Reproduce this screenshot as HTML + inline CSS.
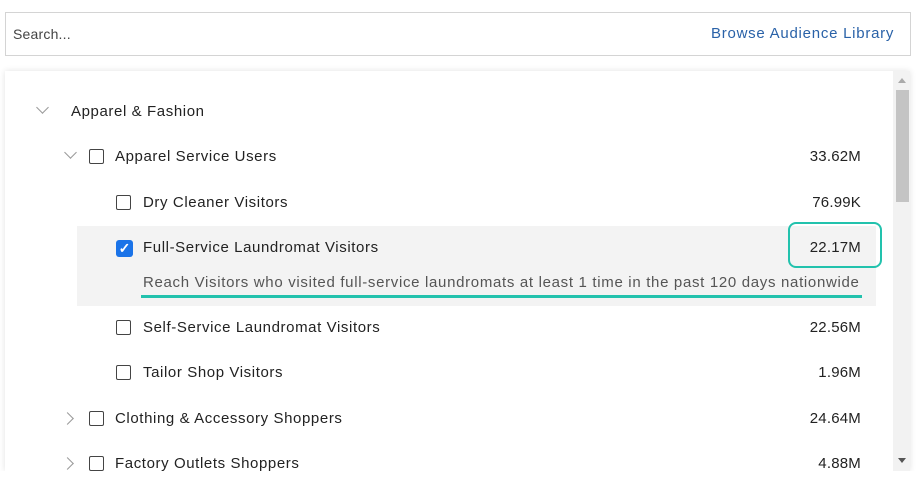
<!DOCTYPE html>
<html><head><style>
body{margin:0;width:922px;height:480px;background:#fff;font-family:"Liberation Sans",sans-serif;color:#222;position:relative;overflow:hidden}
.abs{position:absolute}
.search{left:5px;top:12px;width:906px;height:44px;border:1px solid #d4d4d4;box-sizing:border-box}
.panel{left:5px;top:71px;width:905px;height:400px;background:#fff;box-shadow:0 0 6px rgba(0,0,0,.12)}
.t{font-size:15px;white-space:nowrap;line-height:18px;letter-spacing:0.6px;margin-top:1px}
.n{right:61px;text-align:right;letter-spacing:0.2px}
.cb{width:15px;height:15px;border:1.5px solid #444;border-radius:2px;box-sizing:border-box;background:#fff}
.chev{width:8px;height:8px;border-right:1.3px solid #999;border-bottom:1.3px solid #999}
</style></head><body>
<div class="abs search"></div>
<div class="abs t" style="left:13px;top:24px;color:#444;font-size:14px;letter-spacing:0.2px">Search...</div>
<div class="abs t" style="left:711px;top:24px;color:#2a62a8;font-size:15px;letter-spacing:0.75px">Browse Audience Library</div>
<div class="abs panel"></div>
<div class="abs" style="left:893px;top:71px;width:17px;height:400px;background:#f2f2f2"></div>
<div class="abs" style="left:896px;top:90px;width:13px;height:112px;background:#c4c4c4"></div>
<div class="abs" style="left:898px;top:78px;width:0;height:0;border-left:4px solid transparent;border-right:4px solid transparent;border-bottom:5px solid #aaa"></div>
<div class="abs" style="left:898px;top:458px;width:0;height:0;border-left:4px solid transparent;border-right:4px solid transparent;border-top:5px solid #555"></div>

<div class="abs" style="left:77px;top:226px;width:799px;height:80px;background:#f3f3f3"></div>
<div class="abs" style="left:788px;top:222px;width:94px;height:46px;border:2px solid #22c2ad;border-radius:8px;box-sizing:border-box"></div>
<div class="abs" style="left:141px;top:295px;width:721px;height:3px;background:#22c2ad"></div>

<div class="abs chev" style="left:38px;top:103px;transform:rotate(45deg)"></div>
<div class="abs t" style="left:71px;top:102px">Apparel &amp; Fashion</div>

<div class="abs chev" style="left:66px;top:148px;transform:rotate(45deg)"></div>
<div class="abs cb" style="left:89px;top:149px"></div>
<div class="abs t" style="left:115px;top:147px">Apparel Service Users</div>
<div class="abs t n" style="top:147px">33.62M</div>

<div class="abs cb" style="left:116px;top:195px"></div>
<div class="abs t" style="left:143px;top:193px">Dry Cleaner Visitors</div>
<div class="abs t n" style="top:193px">76.99K</div>

<div class="abs" style="left:116px;top:240px;width:17px;height:17px;background:#1a73e8;border-radius:3px;color:#fff;font-size:14px;line-height:17px;text-align:center;font-weight:bold">✓</div>
<div class="abs t" style="left:143px;top:238px">Full-Service Laundromat Visitors</div>
<div class="abs t n" style="top:238px">22.17M</div>
<div class="abs t" style="left:143px;top:273px;color:#555;letter-spacing:0.68px">Reach Visitors who visited full-service laundromats at least 1 time in the past 120 days nationwide</div>

<div class="abs cb" style="left:116px;top:320px"></div>
<div class="abs t" style="left:143px;top:318px">Self-Service Laundromat Visitors</div>
<div class="abs t n" style="top:318px">22.56M</div>

<div class="abs cb" style="left:116px;top:365px"></div>
<div class="abs t" style="left:143px;top:363px">Tailor Shop Visitors</div>
<div class="abs t n" style="top:363px">1.96M</div>

<div class="abs chev" style="left:63px;top:414px;transform:rotate(-45deg)"></div>
<div class="abs cb" style="left:89px;top:411px"></div>
<div class="abs t" style="left:115px;top:409px">Clothing &amp; Accessory Shoppers</div>
<div class="abs t n" style="top:409px">24.64M</div>

<div class="abs chev" style="left:63px;top:459px;transform:rotate(-45deg)"></div>
<div class="abs cb" style="left:89px;top:456px"></div>
<div class="abs t" style="left:115px;top:454px">Factory Outlets Shoppers</div>
<div class="abs t n" style="top:454px">4.88M</div>
<div class="abs" style="left:0;top:471px;width:922px;height:9px;background:#fff"></div>
</body></html>
